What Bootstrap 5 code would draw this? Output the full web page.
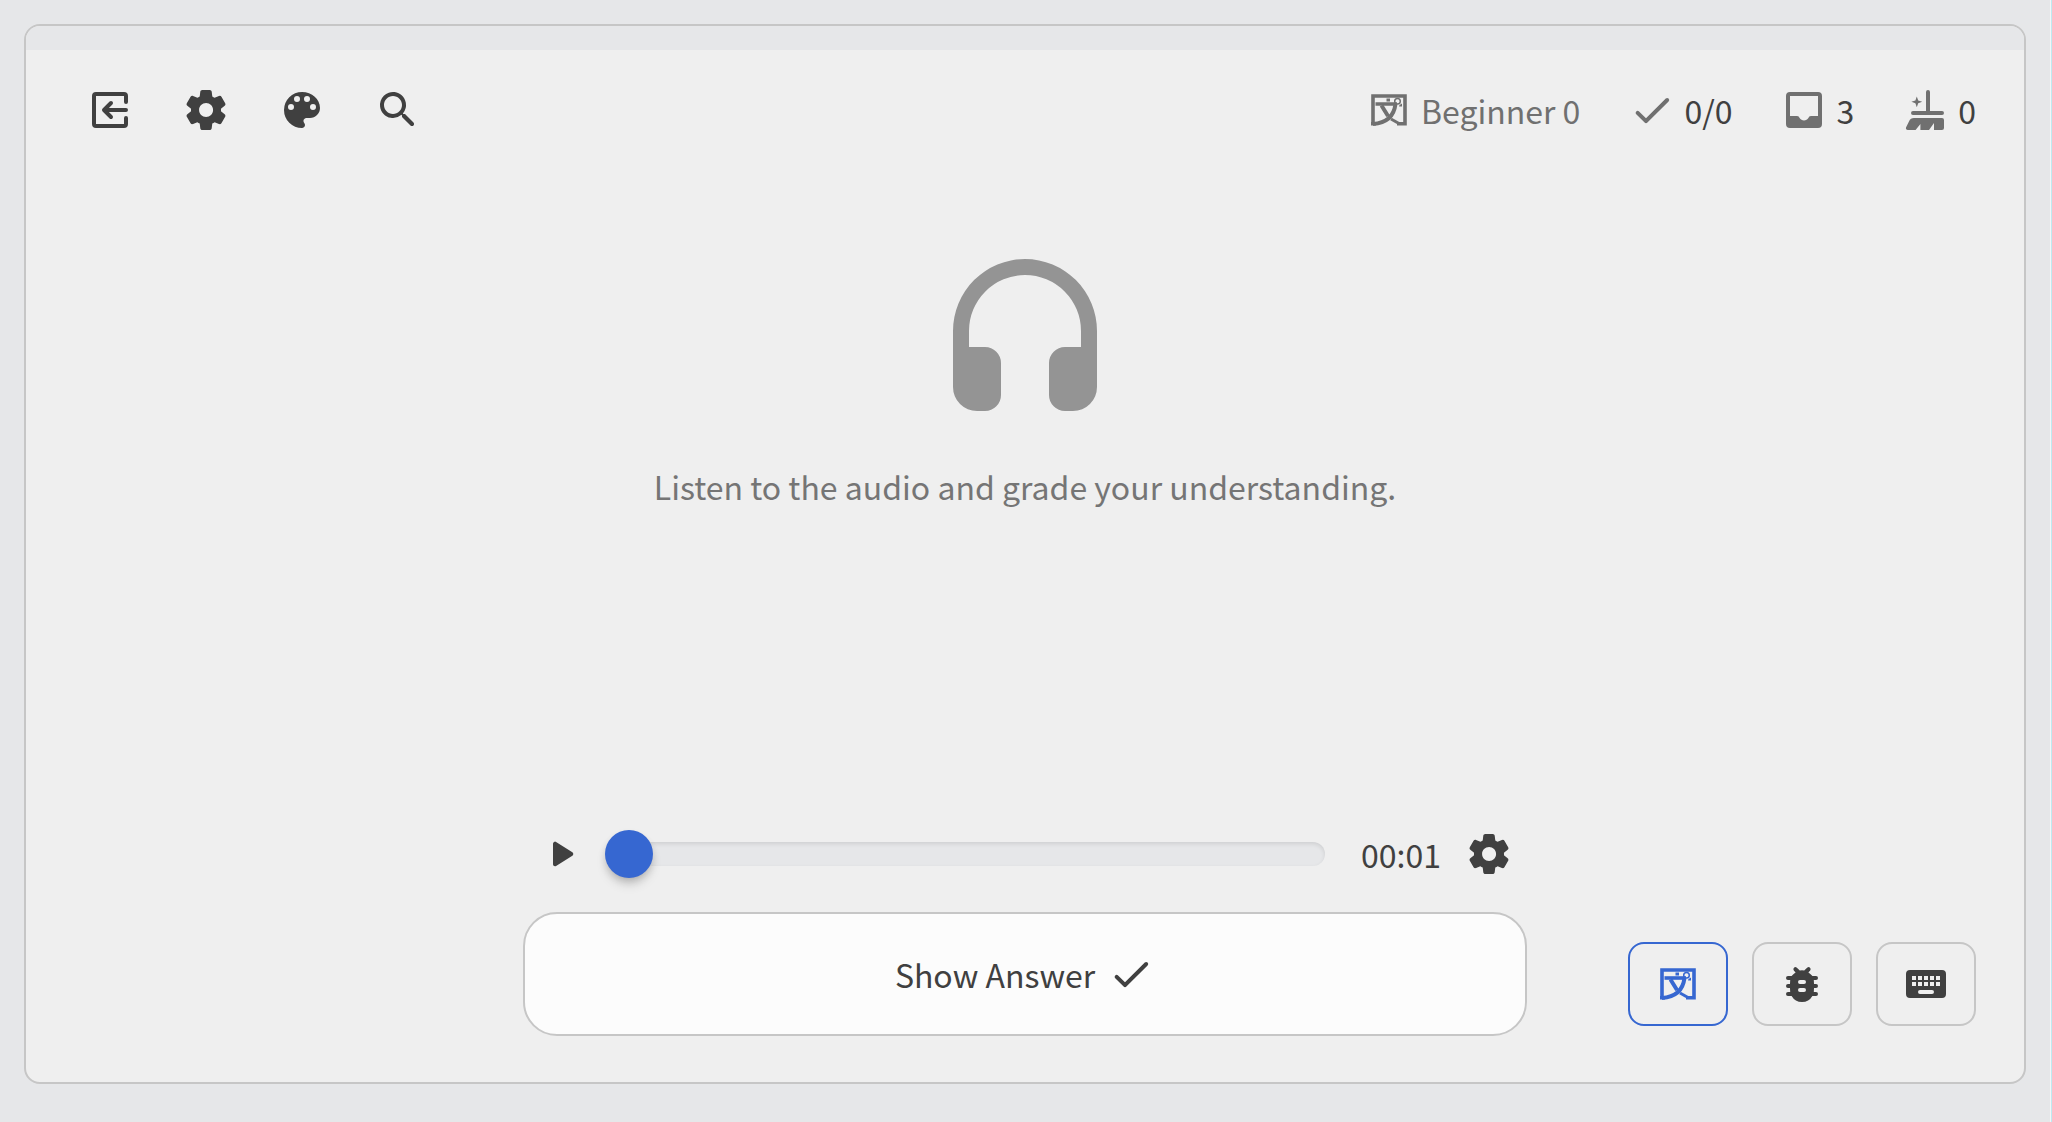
<!DOCTYPE html>
<html lang="en">
<head>
<meta charset="utf-8">
<meta name="viewport" content="width=device-width, initial-scale=1">
<title>Listening practice</title>
<link rel="stylesheet" href="https://cdn.jsdelivr.net/npm/bootstrap@5.3.0/dist/css/bootstrap.min.css">
<style>
:root { --ink: #404040; --muted: #707070; --line: #c6c6c6; --accent: #3667d1; --shade: #e6e7e9; }
html { background: var(--shade); }
body { min-height: 100vh; padding: 24px 25px 38px 24px; background: var(--shade); color: var(--ink);
  border-right: 1px solid #bdeaf2; box-shadow: inset -1px 0 #f4f6f7;
  font: 400 32px/48px "Noto Sans CJK JP", "Noto Sans", sans-serif; }
.study-panel { border: 2px solid var(--line); border-radius: 16px; background: #efefef; overflow: hidden; }
.top-strip { height: 24px; background: var(--shade); }
.toolbar { padding: 36px 48px 0 60px; }
.tools { gap: 48px; }
.stats { gap: 48px; color: var(--muted); }
.stats b { font-weight: 400; color: var(--ink); }
svg { display: block; flex: none; fill: currentColor; }
.ico { width: 48px; height: 48px; }
.ico-inset { padding: 6px; }
.plain-btn { padding: 0; border: 0; background: none; color: inherit; }
.prompt-icon { width: 192px; height: 192px; color: #949494; }
.prompt-area { padding-top: 109px; gap: 27px; color: #757575; }
.controls { display: grid; grid-template-columns: 1fr minmax(0, 1004px) 1fr; padding: 0 48px 46px; }
.player { padding: 0 14px; gap: 20px; margin-bottom: 34px; }
.player time { padding: 0 4px 0 16px; }
.seek { -webkit-appearance: none; appearance: none; height: 48px; background: none; margin: 0; min-width: 0; }
.seek::-webkit-slider-runnable-track { height: 24px; border-radius: 12px; background: var(--shade); box-shadow: inset 0 2px 4px rgba(0,0,0,.1); }
.seek::-webkit-slider-thumb { -webkit-appearance: none; width: 48px; height: 48px; margin-top: -12px; border-radius: 50%; background: var(--accent);
  box-shadow: 0 8px 12px -2px rgba(0,0,0,.14), 0 4px 8px -2px rgba(0,0,0,.2); }
.answer-btn { height: 124px; border: 2px solid var(--line); border-radius: 34px; background: #fcfcfc; color: inherit; gap: 12px; }
.side { gap: 24px; padding-bottom: 10px; }
.side button { width: 100px; height: 84px; border: 2px solid var(--line); border-radius: 16px; background: none; color: inherit; }
.side .active { border-color: var(--accent); color: var(--accent); }
</style>
<script src="https://cdn.jsdelivr.net/npm/bootstrap@5.3.0/dist/js/bootstrap.bundle.min.js"></script>
</head>
<body class="d-flex flex-column">
<svg width="0" height="0" class="position-absolute" aria-hidden="true">
  <symbol id="gear" viewBox="0 0 24 24"><path fill-rule="evenodd" d="M19.5 12c0-.23-.01-.45-.03-.68l1.86-1.41c.4-.3.51-.86.26-1.3l-1.87-3.23a.987.987 0 0 0-1.25-.42l-2.15.91c-.37-.26-.76-.49-1.17-.68l-.29-2.31c-.06-.5-.49-.88-.99-.88h-3.73c-.51 0-.94.38-1 .88l-.29 2.31c-.41.19-.8.42-1.17.68l-2.15-.91c-.46-.2-1-.02-1.25.42L2.41 8.62c-.25.44-.14.99.26 1.3l1.86 1.41a7.343 7.343 0 0 0 0 1.35l-1.86 1.41c-.4.3-.51.86-.26 1.3l1.87 3.23c.25.44.79.62 1.25.42l2.15-.91c.37.26.76.49 1.17.68l.29 2.31c.06.5.49.88.99.88h3.73c.5 0 .93-.38.99-.88l.29-2.31c.41-.19.8-.42 1.17-.68l2.15.91c.46.2 1 .02 1.25-.42l1.87-3.23c.25-.44.14-.99-.26-1.3l-1.86-1.41c.03-.23.04-.45.04-.68zm-7.46 3.5c-1.93 0-3.5-1.57-3.5-3.5s1.57-3.5 3.5-3.5 3.5 1.57 3.5 3.5-1.57 3.5-3.5 3.5z"/></symbol>
  <symbol id="check" viewBox="0 0 24 24"><path d="M9 16.17 5.53 12.7a.996.996 0 1 0-1.41 1.41l4.18 4.18c.39.39 1.02.39 1.41 0L20.29 7.71a.996.996 0 1 0-1.41-1.41L9 16.17z"/></symbol>
  <symbol id="lang" viewBox="0 0 36 32"><g fill="none" stroke="currentColor"><path stroke-width="3.6" d="M0 29.800H5M2 31.500V2H34V29.800H26"/><path stroke-width="3.600" d="M4.500 10H26"/><path stroke-width="4" d="M24.500 10C23 22 15 29 2 30M10.500 11.500 17 22"/><path stroke-width="3" d="M20 25 28 29.500"/><circle cx="26.500" cy="7.300" r="2.800" stroke-width="1.500"/></g><path d="M15.500 4.500h3.500v3h-3.500zM28.500 11l2.500-1.500v3h-3z"/></symbol>
</svg>
<main class="study-panel d-flex flex-column flex-grow-1">
  <div class="top-strip"></div>
  <header class="toolbar d-flex justify-content-between align-items-center">
    <nav class="tools d-flex" aria-label="Tools">
      <button class="plain-btn" aria-label="Exit"><svg class="ico" viewBox="0 0 24 24"><path fill="none" stroke="currentColor" stroke-width="2" stroke-linecap="round" stroke-linejoin="round" d="M20 8V5a1 1 0 0 0-1-1H5a1 1 0 0 0-1 1v14a1 1 0 0 0 1 1h14a1 1 0 0 0 1-1v-3M20 12H9.500M12.500 8.500 9 12l3.500 3.500"/></svg></button>
      <button class="plain-btn" aria-label="Settings"><svg class="ico"><use href="#gear"/></svg></button>
      <button class="plain-btn" aria-label="Theme"><svg class="ico" viewBox="0 0 24 24"><path fill-rule="evenodd" d="M12 3a9 9 0 0 0 0 18c.83 0 1.500-.67 1.500-1.500 0-.39-.15-.74-.39-1.010-.23-.26-.38-.61-.38-.99 0-.83.67-1.500 1.500-1.500H16c2.760 0 5-2.240 5-5 0-4.420-4.030-8-9-8zm-5.500 9a1.500 1.500 0 1 1 0-3 1.500 1.500 0 0 1 0 3zm3-4a1.500 1.500 0 1 1 0-3 1.500 1.500 0 0 1 0 3zm5 0a1.500 1.500 0 1 1 0-3 1.500 1.500 0 0 1 0 3zm3 4a1.500 1.500 0 1 1 0-3 1.500 1.500 0 0 1 0 3z"/></svg></button>
      <button class="plain-btn" aria-label="Search"><svg class="ico" viewBox="0 0 24 24"><path d="M15.500 14h-.79l-.28-.27a6.500 6.500 0 0 0 1.480-5.340c-.47-2.780-2.790-5-5.590-5.340a6.505 6.505 0 0 0-7.270 7.270c.34 2.800 2.560 5.120 5.340 5.590a6.500 6.500 0 0 0 5.340-1.480l.27.28v.79l4.250 4.250c.41.41 1.080.41 1.490 0 .41-.41.41-1.080 0-1.490L15.500 14zm-6 0C7.010 14 5 11.990 5 9.500S7.010 5 9.500 5 14 7.010 14 9.500 11.990 14 9.500 14z"/></svg></button>
    </nav>
    <div class="stats d-flex">
      <div class="d-flex gap-2"><svg class="ico ico-inset" viewBox="0 0 36 32"><use href="#lang"/></svg><span>Beginner 0</span></div>
      <div class="d-flex gap-2"><svg class="ico"><use href="#check"/></svg><b>0/0</b></div>
      <div class="d-flex gap-2"><svg class="ico" viewBox="0 0 24 24"><path fill-rule="evenodd" d="M5 3h14a2 2 0 0 1 2 2v14a2 2 0 0 1-2 2H5a2 2 0 0 1-2-2V5a2 2 0 0 1 2-2zm0 2v10h3.500c.8 0 1 .4 1.300 1a2.600 2.600 0 0 0 4.400 0c.3-.6.500-1 1.300-1H19V5z"/></svg><b>3</b></div>
      <div class="d-flex gap-2"><svg class="ico" viewBox="0 0 24 24"><path d="M12 12.500V3a1 1 0 0 1 2 0v9.500h6a1 1 0 0 1 0 2H5.500a1 1 0 0 1 0-2zM7.400 5.200l.7 2 2 .7-2 .7-.7 2-.7-2-2-.7 2-.7zM6 16H20a1 1 0 0 1 1 1v4a1 1 0 0 1-1 1H16V18.500L13.500 22H9.200V19L6.800 22H3a1 1 0 0 1-1-1.200L3.600 17.500C4 16.500 4.800 16 6 16z"/></svg><b>0</b></div>
    </div>
  </header>
  <section class="prompt-area d-flex flex-column align-items-center flex-grow-1">
    <svg class="prompt-icon" viewBox="0 0 24 24"><path d="M3 11v7a3 3 0 0 0 3 3h1a2 2 0 0 0 2-2v-4a2 2 0 0 0-2-2H5v-2a7 7 0 0 1 14 0v2h-2a2 2 0 0 0-2 2v4a2 2 0 0 0 2 2h1a3 3 0 0 0 3-3v-7a9 9 0 0 0-18 0z"/></svg>
    <p class="mb-0">Listen to the audio and grade your understanding.</p>
  </section>
  <footer class="controls">
    <div></div>
    <div>
      <div class="player d-flex align-items-center">
        <button class="plain-btn" aria-label="Play"><svg class="ico" viewBox="0 0 24 24"><path d="M8 6.820v10.360c0 .79.870 1.270 1.540.84l8.140-5.180c.62-.39.62-1.290 0-1.690L9.540 5.980A.998.998 0 0 0 8 6.820z"/></svg></button>
        <input class="seek flex-grow-1" type="range" min="0" max="100" value="0" aria-label="Seek">
        <time>00:01</time>
        <button class="plain-btn" aria-label="Audio settings"><svg class="ico"><use href="#gear"/></svg></button>
      </div>
      <button class="answer-btn w-100 d-flex justify-content-center align-items-center">Show Answer <svg class="ico"><use href="#check"/></svg></button>
    </div>
    <div class="side d-flex justify-content-end align-items-end">
      <button class="active d-flex justify-content-center align-items-center" aria-label="Translate"><svg width="36" height="32"><use href="#lang"/></svg></button>
      <button class="d-flex justify-content-center align-items-center" aria-label="Report a bug"><svg class="ico" viewBox="0 0 24 24"><path fill-rule="evenodd" d="M7.900 5.200a1 1 0 0 1 1.400-1.400L10.900 5.200a6 6 0 0 1 2.200 0l1.600-1.400a1 1 0 0 1 1.400 1.400L15.200 6.200c.8.500 1.500 1.100 2 1.800H19a1 1 0 0 1 0 2h-1.100L18 12h1a1 1 0 0 1 0 2h-1l-.1 2H19a1 1 0 0 1 0 2h-1.800a6 6 0 0 1-10.400 0H5a1 1 0 0 1 0-2h1.100L6 14H5a1 1 0 0 1 0-2h1l.1-2H5a1 1 0 0 1 0-2h1.800c.5-.7 1.200-1.300 2-1.800zM11 10a1 1 0 0 0 0 2h2a1 1 0 0 0 0-2zm0 4a1 1 0 0 0 0 2h2a1 1 0 0 0 0-2z"/></svg></button>
      <button class="d-flex justify-content-center align-items-center" aria-label="Keyboard"><svg class="ico" viewBox="0 0 24 24"><path fill-rule="evenodd" d="M4 5h16a2 2 0 0 1 2 2v10a2 2 0 0 1-2 2H4a2 2 0 0 1-2-2V7a2 2 0 0 1 2-2zm1 3v2h2V8zm3 0v2h2V8zm3 0v2h2V8zm3 0v2h2V8zm3 0v2h2V8zM5 11v2h2v-2zm3 0v2h2v-2zm3 0v2h2v-2zm3 0v2h2v-2zm3 0v2h2v-2zM9 15a1 1 0 0 0 0 2h6a1 1 0 0 0 0-2z"/></svg></button>
    </div>
  </footer>
</main>
</body>
</html>
